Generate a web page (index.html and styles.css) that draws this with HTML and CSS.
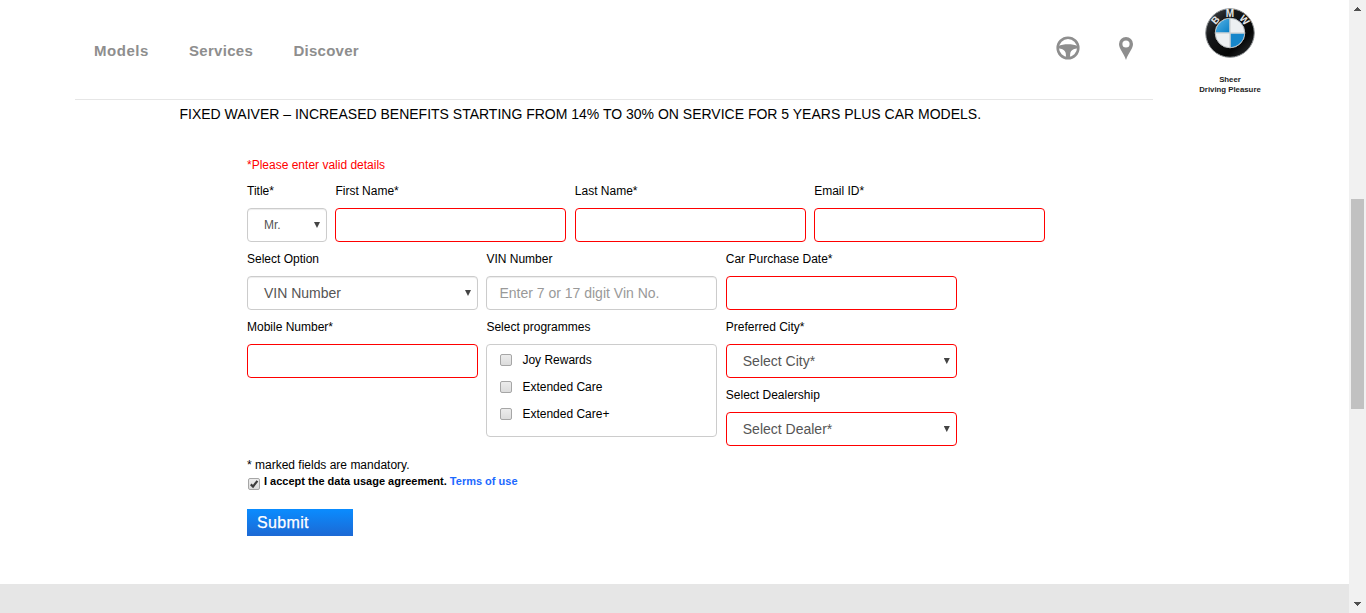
FILE: index.html
```html
<!DOCTYPE html>
<html lang="en">
<head>
<meta charset="utf-8">
<title>BMW Service Benefits</title>
<link rel="stylesheet" href="styles.css">
</head>
<body>
<div class="page">
  <header class="header">
    <div class="bar">
      <nav class="nav"><a class="models">Models</a><a class="services">Services</a><a class="discover">Discover</a></nav>
      <div class="tools">
        <svg class="wheel" viewBox="0 0 24 24" width="24" height="24"><circle cx="12" cy="12" r="10.3" fill="none" stroke="#8e8e8e" stroke-width="2.6"/><path fill="#8e8e8e" d="M2 10.2C5 8.8 8.500 8.300 12 8.300S19 8.800 22 10.200V12.500C18.500 12.500 15 13.800 14.300 17L13.800 22H10.200L9.700 17C9 13.800 5.500 12.500 2 12.500Z"/></svg>
        <svg class="pin" viewBox="0 0 14 23" width="14" height="23"><path fill="#8e8e8e" fill-rule="evenodd" d="M7 0A7 7 0 0 1 14 7C14 12 9.500 15.500 7 23C4.500 15.500 0 12 0 7A7 7 0 0 1 7 0ZM7 3.400A3.600 3.600 0 1 0 7 10.600A3.600 3.600 0 1 0 7 3.400Z"/></svg>
      </div>
    </div>
    <div class="brand">
      <svg class="roundel" viewBox="0 0 50 50" width="50" height="50">
        <defs>
          <linearGradient id="ring" x1="0" y1="0" x2="1" y2="1"><stop offset="0" stop-color="#4b5054"/><stop offset=".3" stop-color="#17191b"/><stop offset=".7" stop-color="#050606"/><stop offset="1" stop-color="#34383b"/></linearGradient>
          <linearGradient id="blue" x1="0" y1="0" x2="1" y2="1"><stop offset="0" stop-color="#5ab4e5"/><stop offset="1" stop-color="#087fc6"/></linearGradient>
        </defs>
        <circle cx="25" cy="25" r="24.300" fill="url(#ring)" stroke="#8f9395" stroke-width="1"/>
        <circle cx="25" cy="25" r="14.800" fill="#edf0f2" stroke="#b8bcbe" stroke-width="1"/>
        <path fill="url(#blue)" d="M24.500 24.500V10.800A14.200 14.200 0 0 0 10.800 24.500Z"/>
        <path fill="#1686ca" d="M25.500 25.500V39.200A14.200 14.200 0 0 0 39.200 25.500Z"/>
        <path stroke="#c5c9cb" d="M25 10.500V39.500M10.500 25H39.500"/>
        <g class="roundel-text"><text x="25" y="8.900">M</text><text x="25" y="8.900" transform="rotate(-48 25 25)">B</text><text x="25" y="8.900" transform="rotate(48 25 25)">W</text></g>
      </svg>
      <div class="slogan">Sheer<br>Driving Pleasure</div>
    </div>
  </header>

  <main class="content">
    <h1 class="headline"><span>FIXED WAIVER – INCREASED BENEFITS STARTING FROM 14% TO 30% ON SERVICE FOR 5 YEARS PLUS CAR MODELS.</span></h1>
    <form class="form">
      <p class="error">*Please enter valid details</p>
      <div class="row">
        <div class="field title"><label>Title*</label><div class="control select small"><span>Mr.</span><i class="arrow"></i></div></div>
        <div class="field"><label>First Name*</label><input class="control invalid"></div>
        <div class="field"><label>Last Name*</label><input class="control invalid"></div>
        <div class="field"><label>Email ID*</label><input class="control invalid"></div>
      </div>
      <div class="row">
        <div class="field"><label>Select Option</label><div class="control select"><span>VIN Number</span><i class="arrow"></i></div></div>
        <div class="field"><label>VIN Number</label><input class="control" placeholder="Enter 7 or 17 digit Vin No."></div>
        <div class="field"><label>Car Purchase Date*</label><input class="control invalid"></div>
      </div>
      <div class="row">
        <div class="field"><label>Mobile Number*</label><input class="control invalid"></div>
        <div class="field"><label>Select programmes</label>
          <div class="programmes">
            <div class="option"><i class="check"></i><span>Joy Rewards</span></div>
            <div class="option"><i class="check"></i><span>Extended Care</span></div>
            <div class="option"><i class="check"></i><span>Extended Care+</span></div>
          </div>
        </div>
        <div class="stack">
          <div class="field"><label>Preferred City*</label><div class="control select invalid"><span>Select City*</span><i class="arrow"></i></div></div>
          <div class="field"><label>Select Dealership</label><div class="control select invalid"><span>Select Dealer*</span><i class="arrow"></i></div></div>
        </div>
      </div>
      <p class="mandatory">* marked fields are mandatory.</p>
      <div class="agree"><i class="check"><svg viewBox="0 0 10 10" width="10" height="10"><path d="M1.800 5.400L4 7.600L8.400 1.800" fill="none" stroke="#3c3c3c" stroke-width="2.200"/></svg></i><span>I accept the data usage agreement. <a>Terms of use</a></span></div>
      <button class="submit" type="button">Submit</button>
    </form>
  </main>
  <footer class="footer"></footer>
</div>
<div class="scrollbar">
  <svg class="up" viewBox="0 0 7 4" width="7" height="4" shape-rendering="crispEdges"><path fill="#505050" d="M3 0H4V1H5V2H6V3H7V4H0V3H1V2H2V1H3Z"/></svg>
  <div class="thumb"></div>
  <svg class="down" viewBox="0 0 7 4" width="7" height="4" shape-rendering="crispEdges"><path fill="#505050" d="M0 0H7V1H6V2H5V3H4V4H3V3H2V2H1V1H0Z"/></svg>
</div>
</body>
</html>
```
FILE: styles.css
```css
* { box-sizing: border-box; }
body {
  margin: 0;
  height: 613px;
  display: flex;
  overflow: hidden;
  background: #fff;
  color: #000;
  font: 12px/17px "Liberation Sans", Arial, sans-serif;
}
p, h1 { margin: 0; font-weight: normal; }
.page { width: 1349px; display: flex; flex-direction: column; }

.header { display: flex; height: 100px; padding-left: 75px; }
.bar {
  width: 1078px;
  display: flex;
  justify-content: space-between;
  border-bottom: 1px solid #e6e6e6;
}
.nav { display: flex; padding: 41px 0 0 19px; font-size: 15px; line-height: 20px; font-weight: bold; color: #8e8e8e; }
.models { width: 95px; letter-spacing: .55px; }
.services { width: 104.5px; letter-spacing: .3px; }
.discover { letter-spacing: .25px; }
.tools { display: flex; align-items: flex-start; gap: 39px; padding: 36px 20.5px 0 0; }
.pin { margin-top: 1px; }
.brand { width: 154px; display: flex; flex-direction: column; align-items: center; padding-top: 8px; }
.roundel-text { fill: #e5e7e8; font-size: 10px; font-weight: bold; text-anchor: middle; }
.slogan { margin-top: 17px; font-size: 7.8px; line-height: 10px; font-weight: bold; text-align: center; color: #222; white-space: nowrap; }

.content { height: 484px; }
.headline { padding: 4px 0 0 179.5px; font-size: 14px; line-height: 20px; white-space: nowrap; }
.form { padding: 33px 0 0 247px; }
.error { color: #f00; margin-bottom: 9px; }
.row { display: flex; align-items: flex-start; gap: 8.4px; margin-bottom: 8px; }
.row + .row { margin-top: 9px; }
.row { margin-bottom: 0; }
.field { width: 231px; display: flex; flex-direction: column; gap: 8px; }
.title { width: 80px; }
.stack { display: flex; flex-direction: column; gap: 9px; }
.control {
  width: 100%;
  height: 34px;
  padding: 0 12px;
  border: 1px solid #ccc;
  border-radius: 4px;
  background: #fff;
  box-shadow: inset 0 1px 1px rgba(0, 0, 0, .075);
  font: 14px/20px "Liberation Sans", Arial, sans-serif;
  color: #555;
}
.control::placeholder { color: #999; opacity: 1; }
.select { display: flex; align-items: center; justify-content: space-between; padding: 0 6px 0 16px; }
.small { font-size: 12px; }
.invalid { border-color: #f00; box-shadow: none; }
.arrow { width: 6px; height: 6px; background: #444; clip-path: polygon(0 0, 100% 0, 50% 100%); }

.programmes {
  height: 93px;
  padding: 7px 13px;
  border: 1px solid #ccc;
  border-radius: 4px;
}
.option { height: 27px; display: flex; align-items: flex-start; gap: 10px; }
.option .check { margin-top: 2px; }
.check {
  display: flex;
  flex: none;
  width: 12px;
  height: 12px;
  border: 1px solid #a6a6a6;
  border-radius: 2px;
  background: linear-gradient(#ececec, #dcdcdc);
}
.mandatory { margin-top: 11px; }
.agree { display: flex; gap: 4px; padding-left: 1px; font-size: 11px; line-height: 16px; font-weight: bold; margin-top: -1px; }
.agree .check { margin-top: 5px; }
.agree a { color: #1c69ff; }
.submit {
  display: block;
  width: 106px;
  height: 27px;
  margin-top: 19px;
  padding: 0 10px;
  border: 0;
  background: linear-gradient(#0a8cff, #1c69d4);
  color: #fff;
  font: 16px/28px "Liberation Sans", Arial, sans-serif;
  letter-spacing: .35px;
  -webkit-text-stroke: .25px #fff;
  text-align: left;
}
.footer { height: 29px; background: #e6e6e6; }

.scrollbar { width: 17px; height: 613px; background: #f1f1f1; display: flex; flex-direction: column; align-items: center; padding: 7px 0; }
.thumb { width: 13px; height: 210px; margin-top: 188px; background: #c1c1c1; }
.down { margin-top: auto; }
```
